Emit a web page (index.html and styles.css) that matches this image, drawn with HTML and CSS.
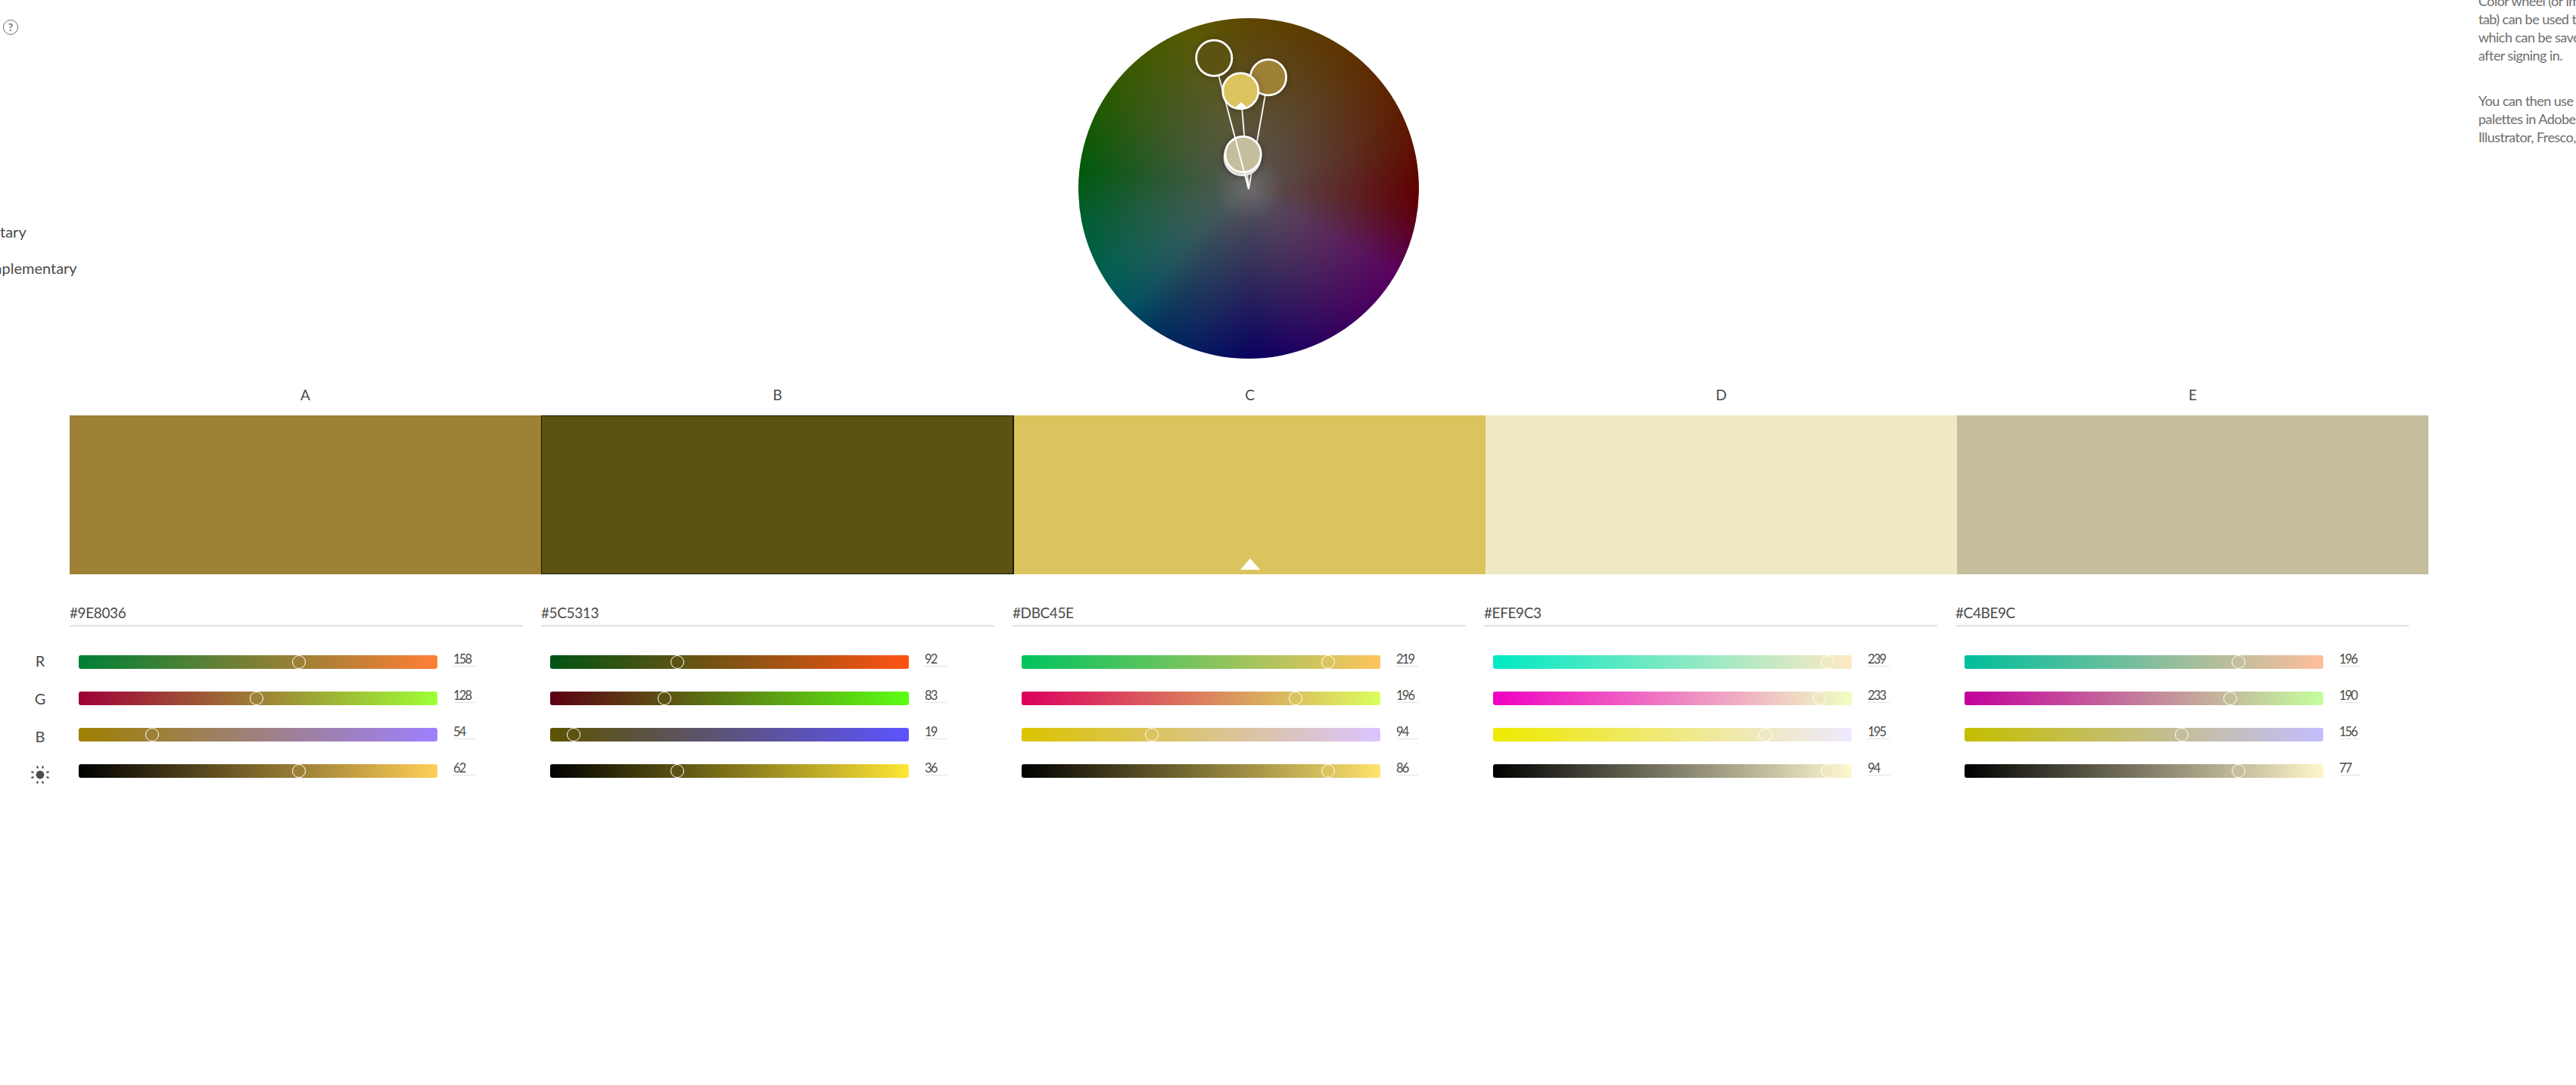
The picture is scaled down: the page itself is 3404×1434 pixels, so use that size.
FILE: index.html
```html
<!DOCTYPE html>
<html lang="en">
<head>
<meta charset="utf-8">
<title>Color wheel</title>
<link rel="stylesheet" href="styles.css">
</head>
<body>
<main class="page">
  <section class="top">
    <div class="rules-col">
      <span class="help">?</span>
      <ul class="rules">
        <li class="rule rule-a">tary</li>
        <li class="rule rule-b">mplementary</li>
      </ul>
    </div>
    <div class="wheel">
      <div class="wheel-tint"></div>
      <svg class="wheel-marks" viewBox="0 0 450 450" aria-hidden="true">
        <g class="spoke">
          <line x1="225" y1="226" x2="251" y2="78.300"/>
          <line x1="225" y1="226" x2="214.300" y2="96.300"/>
          <line x1="225" y1="226" x2="216.700" y2="184"/>
        </g>
        <circle class="dot" cx="216.700" cy="184" r="23.600" fill="#EFE9C3"/>
        <circle class="dot" cx="217.700" cy="180" r="23.600" fill="#C4BE9C"/>
        <circle class="dot" cx="251" cy="78.300" r="23.600" fill="#9E8036"/>
        <line class="spoke" x1="225" y1="226" x2="179.300" y2="52.700"/>
        <circle class="dot" cx="179.300" cy="52.700" r="23.600" fill="#5C5313"/>
        <circle class="dot" cx="214.300" cy="96.300" r="23.600" fill="#DBC45E"/>
        <polygon points="215,111 205.500,119.500 224.500,119.500" fill="#fff"/>
      </svg>
    </div>
    <aside class="note">
      <p class="note-p">Color wheel (or image<br>tab) can be used to<br>which can be saved<br>after signing in.</p>
      <p class="note-p">You can then use the<br>palettes in Adobe<br>Illustrator, Fresco,</p>
    </aside>
  </section>

  <div class="letters">
    <span class="letter">A</span><span class="letter">B</span><span class="letter">C</span><span class="letter">D</span><span class="letter">E</span>
  </div>

  <div class="swatches">
    <div class="swatch" style="background:#9E8036"></div>
    <div class="swatch swatch-selected" style="background:#5C5313"></div>
    <div class="swatch swatch-base" style="background:#DBC45E"><span class="base-mark"></span></div>
    <div class="swatch" style="background:#EFE9C3"></div>
    <div class="swatch" style="background:#C4BE9C"></div>
  </div>

  <section class="details">
    <div class="channel-labels">
      <span class="channel">R</span>
      <span class="channel">G</span>
      <span class="channel">B</span>
      <span class="channel">
        <svg class="sun" viewBox="0 0 26 26" aria-hidden="true">
          <circle cx="13" cy="13" r="5.400" fill="#4b4b4b"/>
          <g stroke="#4b4b4b" stroke-width="2.200" fill="none">
            <line x1="9" y1="1.500" x2="10" y2="4.500"/><line x1="17" y1="1.500" x2="16" y2="4.500"/>
            <line x1="1.500" y1="9" x2="4.500" y2="10"/><line x1="24.500" y1="9" x2="21.500" y2="10"/>
            <line x1="1.500" y1="17" x2="4.500" y2="16"/><line x1="24.500" y1="17" x2="21.500" y2="16"/>
            <line x1="9" y1="24.500" x2="10" y2="21.500"/><line x1="17" y1="24.500" x2="16" y2="21.500"/>
          </g>
        </svg>
      </span>
    </div>

    <div class="column" style="--c:#9E8036">
      <div class="hex">#9E8036</div>
      <div class="row"><div class="track" style="background:linear-gradient(90deg,rgb(0,128,54),rgb(255,128,54))"><i class="knob" style="left:291px"></i></div><span class="value">158</span></div>
      <div class="row"><div class="track" style="background:linear-gradient(90deg,rgb(158,0,54),rgb(158,255,54))"><i class="knob" style="left:235px"></i></div><span class="value">128</span></div>
      <div class="row"><div class="track" style="background:linear-gradient(90deg,rgb(158,128,0),rgb(158,128,255))"><i class="knob" style="left:97px"></i></div><span class="value">54</span></div>
      <div class="row"><div class="track" style="background:linear-gradient(90deg,#000,rgb(255,207,87))"><i class="knob" style="left:291px"></i></div><span class="value">62</span></div>
    </div>

    <div class="column" style="--c:#5C5313">
      <div class="hex">#5C5313</div>
      <div class="row"><div class="track" style="background:linear-gradient(90deg,rgb(0,83,19),rgb(255,83,19))"><i class="knob" style="left:168px"></i></div><span class="value">92</span></div>
      <div class="row"><div class="track" style="background:linear-gradient(90deg,rgb(92,0,19),rgb(92,255,19))"><i class="knob" style="left:151px"></i></div><span class="value">83</span></div>
      <div class="row"><div class="track" style="background:linear-gradient(90deg,rgb(92,83,0),rgb(92,83,255))"><i class="knob" style="left:31px"></i></div><span class="value">19</span></div>
      <div class="row"><div class="track" style="background:linear-gradient(90deg,#000,rgb(255,230,53))"><i class="knob" style="left:168px"></i></div><span class="value">36</span></div>
    </div>

    <div class="column" style="--c:#DBC45E">
      <div class="hex">#DBC45E</div>
      <div class="row"><div class="track" style="background:linear-gradient(90deg,rgb(0,196,94),rgb(255,196,94))"><i class="knob" style="left:405px"></i></div><span class="value">219</span></div>
      <div class="row"><div class="track" style="background:linear-gradient(90deg,rgb(219,0,94),rgb(219,255,94))"><i class="knob" style="left:362px"></i></div><span class="value">196</span></div>
      <div class="row"><div class="track" style="background:linear-gradient(90deg,rgb(219,196,0),rgb(219,196,255))"><i class="knob" style="left:172px"></i></div><span class="value">94</span></div>
      <div class="row"><div class="track" style="background:linear-gradient(90deg,#000,rgb(255,228,109))"><i class="knob" style="left:405px"></i></div><span class="value">86</span></div>
    </div>

    <div class="column" style="--c:#EFE9C3">
      <div class="hex">#EFE9C3</div>
      <div class="row"><div class="track" style="background:linear-gradient(90deg,rgb(0,233,195),rgb(255,233,195))"><i class="knob" style="left:442px"></i></div><span class="value">239</span></div>
      <div class="row"><div class="track" style="background:linear-gradient(90deg,rgb(239,0,195),rgb(239,255,195))"><i class="knob" style="left:431px"></i></div><span class="value">233</span></div>
      <div class="row"><div class="track" style="background:linear-gradient(90deg,rgb(239,233,0),rgb(239,233,255))"><i class="knob" style="left:360px"></i></div><span class="value">195</span></div>
      <div class="row"><div class="track" style="background:linear-gradient(90deg,#000,rgb(255,249,208))"><i class="knob" style="left:442px"></i></div><span class="value">94</span></div>
    </div>

    <div class="column" style="--c:#C4BE9C">
      <div class="hex">#C4BE9C</div>
      <div class="row"><div class="track" style="background:linear-gradient(90deg,rgb(0,190,156),rgb(255,190,156))"><i class="knob" style="left:362px"></i></div><span class="value">196</span></div>
      <div class="row"><div class="track" style="background:linear-gradient(90deg,rgb(196,0,156),rgb(196,255,156))"><i class="knob" style="left:351px"></i></div><span class="value">190</span></div>
      <div class="row"><div class="track" style="background:linear-gradient(90deg,rgb(196,190,0),rgb(196,190,255))"><i class="knob" style="left:287px"></i></div><span class="value">156</span></div>
      <div class="row"><div class="track" style="background:linear-gradient(90deg,#000,rgb(255,246,203))"><i class="knob" style="left:362px"></i></div><span class="value">77</span></div>
    </div>
  </section>
</main>
</body>
</html>
```

FILE: styles.css
```css
* { box-sizing: border-box; }
html, body { margin: 0; padding: 0; background: #fff; }
body { font-family: Lato, "Open Sans", sans-serif; color: #4b4b4b; overflow: hidden; }
.page { width: 3404px; height: 1434px; overflow: hidden; }

.top { display: grid; grid-template-columns: 1425px 450px 1fr; height: 510px; }

.rules-col { padding-top: 26px; }
.help { display: flex; align-items: center; justify-content: center; width: 20px; height: 20px; margin-left: 4px; border: 1.2px solid #6e6e6e; border-radius: 50%; font-size: 13px; font-weight: 700; line-height: 1; color: #6e6e6e; }
.rules { list-style: none; margin: 236px 0 0; padding: 0; font-size: 20px; line-height: 48px; }
.rule { white-space: nowrap; }
.rule-b { margin-left: -14px; }

.wheel { position: relative; width: 450px; height: 450px; margin-top: 24px; border-radius: 50%; overflow: hidden;
  background: conic-gradient(from 0deg, #5e4600 0deg, #5e3400 35deg, #5f1400 74deg, #600400 86deg, #600002 93deg, #5e0012 100deg, #5c0036 109deg, #5a0060 120deg, #4c0060 133deg, #0a0060 178deg, #00305e 212deg, #005460 226deg, #006052 240deg, #005e30 260deg, #005a0c 276deg, #125a04 288deg, #2e5a00 306deg, #5a5a00 340deg, #5e4600 360deg); }
.wheel-tint { position: absolute; inset: 0; border-radius: 50%;
  background: radial-gradient(circle closest-side, rgba(150,150,150,.3) 0, rgba(150,150,150,0) 20%), radial-gradient(circle closest-side, rgba(88,88,88,1) 0, rgba(88,88,88,0) 100%); }
.wheel-marks { position: absolute; inset: 0; width: 450px; height: 450px; }
.spoke { stroke: #fff; stroke-width: 1.800; fill: none; }
.dot { stroke: #fff; stroke-width: 2.800; filter: drop-shadow(0 1px 4px rgba(0,0,0,.25)); }

.note { padding-left: 1400px; margin-top: -11px; font-size: 18px; line-height: 24px; letter-spacing: -0.55px; color: #6e6e6e; white-space: nowrap; }
.note-p { margin: 0 0 36px; }

.letters { display: grid; grid-template-columns: 623px 625px 623px 623px 623px; margin-left: 92px; height: 39px; font-size: 19px; line-height: 24px; text-align: center; }
.letter { display: block; }

.swatches { display: grid; grid-template-columns: 623px 625px 623px 623px 623px; margin-left: 92px; height: 210px; }
.swatch-selected { border: 1px solid #1c1a00; border-right-width: 2px; }
.swatch-base { display: flex; justify-content: center; align-items: flex-end; padding-bottom: 6px; }
.base-mark { width: 0; height: 0; border-left: 13.500px solid transparent; border-right: 13.500px solid transparent; border-bottom: 15px solid #fff; }

.details { display: grid; grid-template-columns: repeat(5, 599px); column-gap: 24px; margin-left: 92px; margin-top: 37px; position: relative; }
.channel-labels { position: absolute; left: -79px; top: 65px; width: 80px; display: flex; flex-direction: column; font-size: 20px; }
.channel { height: 50px; line-height: 24px; text-align: center; }
.sun { width: 26px; height: 26px; display: inline-block; }

.hex { height: 32px; padding-top: 1px; font-size: 19px; line-height: 26px; letter-spacing: -0.4px; border-bottom: 2px solid #e1e1e1; margin-bottom: 38px; }
.row { display: flex; gap: 21px; height: 48px; padding-left: 12px; }
.track { position: relative; width: 474px; height: 18px; border-radius: 3px; }
.knob { position: absolute; top: 0; width: 18px; height: 18px; margin-left: -9px; border-radius: 50%; border: 1px solid #fff; background: var(--c); }
.value { display: block; width: 29px; height: 15px; border-bottom: 1px solid #e1e1e1; font-size: 16.500px; line-height: 11px; letter-spacing: -1.800px; }
```
